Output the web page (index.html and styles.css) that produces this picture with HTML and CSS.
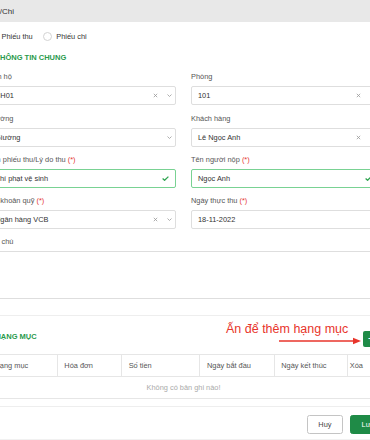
FILE: index.html
```html
<!DOCTYPE html>
<html lang="vi">
<head>
<meta charset="utf-8">
<title>Phiếu Thu/Chi</title>
<link rel="stylesheet" href="styles.css">
</head>
<body>
<div class="modal">
  <div class="modal-head"><span class="modal-title">Phiếu Thu/Chi</span></div>
  <div class="content">
    <div class="radios">
      <label class="radio checked"><span class="dot"></span>Phiếu thu</label>
      <label class="radio"><span class="dot"></span>Phiếu chi</label>
    </div>
    <h3 class="sec-title first">THÔNG TIN CHUNG</h3>
    <div class="grid">
      <div class="field">
        <label>Căn hộ</label>
        <div class="input"><span>CH01</span>
          <span class="icons"><svg class="x" viewBox="0 0 5 5"><path d="M0.8 0.8 4.2 4.2M4.2 0.8 0.8 4.2"/></svg><svg class="chev" viewBox="0 0 5 3"><path d="M0.5 0.5 2.5 2.5 4.5 0.5"/></svg></span>
        </div>
      </div>
      <div class="field">
        <label>Phòng</label>
        <div class="input"><span>101</span>
          <span class="icons"><svg class="x" viewBox="0 0 5 5"><path d="M0.8 0.8 4.2 4.2M4.2 0.8 0.8 4.2"/></svg><svg class="chev" viewBox="0 0 5 3"><path d="M0.5 0.5 2.5 2.5 4.5 0.5"/></svg></span>
        </div>
      </div>
      <div class="field">
        <label>Giường</label>
        <div class="input"><span>Giường</span>
          <span class="icons"><svg class="chev" viewBox="0 0 5 3"><path d="M0.5 0.5 2.5 2.5 4.5 0.5"/></svg></span>
        </div>
      </div>
      <div class="field">
        <label>Khách hàng</label>
        <div class="input"><span>Lê Ngọc Anh</span>
          <span class="icons"><svg class="x" viewBox="0 0 5 5"><path d="M0.8 0.8 4.2 4.2M4.2 0.8 0.8 4.2"/></svg><svg class="chev" viewBox="0 0 5 3"><path d="M0.5 0.5 2.5 2.5 4.5 0.5"/></svg></span>
        </div>
      </div>
      <div class="field">
        <label>Tên phiếu thu/Lý do thu <span class="req">(*)</span></label>
        <div class="input valid"><span>Phí phạt vệ sinh</span>
          <svg class="check" viewBox="0 0 7 5"><path d="M0.6 2.6 2.6 4.3 6.4 0.6"/></svg>
        </div>
      </div>
      <div class="field">
        <label>Tên người nộp <span class="req">(*)</span></label>
        <div class="input valid"><span>Ngọc Anh</span>
          <svg class="check" viewBox="0 0 7 5"><path d="M0.6 2.6 2.6 4.3 6.4 0.6"/></svg>
        </div>
      </div>
      <div class="field">
        <label>Tài khoản quỹ <span class="req">(*)</span></label>
        <div class="input"><span>Ngân hàng VCB</span>
          <span class="icons"><svg class="x" viewBox="0 0 5 5"><path d="M0.8 0.8 4.2 4.2M4.2 0.8 0.8 4.2"/></svg><svg class="chev" viewBox="0 0 5 3"><path d="M0.5 0.5 2.5 2.5 4.5 0.5"/></svg></span>
        </div>
      </div>
      <div class="field">
        <label>Ngày thực thu <span class="req">(*)</span></label>
        <div class="input"><span>18-11-2022</span></div>
      </div>
      <div class="field full">
        <label>Ghi chú</label>
        <div class="textarea"></div>
      </div>
    </div>
    <div class="divider"></div>
    <div class="sec-row">
      <h3 class="sec-title">HẠNG MỤC</h3>
      <button class="add-btn">+</button>
    </div>
    <table class="items">
      <thead>
        <tr>
          <th class="c1">Hạng mục</th>
          <th class="c2">Hóa đơn</th>
          <th class="c3">Số tiền</th>
          <th class="c4">Ngày bắt đầu</th>
          <th class="c5">Ngày kết thúc</th>
          <th class="c6">Xóa</th>
        </tr>
      </thead>
      <tbody>
        <tr><td colspan="6" class="empty">Không có bản ghi nào!</td></tr>
      </tbody>
    </table>
  </div>
  <div class="modal-foot">
    <button class="btn ghost">Huỷ</button>
    <button class="btn primary">Lưu</button>
  </div>
</div>
<div class="note">Ấn để thêm hạng mục</div>
<svg class="arrow" viewBox="0 0 82 8"><path d="M0 4H75" /><polygon points="74,0.8 82,4 74,7.2"/></svg>
</body>
</html>
```
FILE: styles.css
```css
* { box-sizing: border-box; margin: 0; padding: 0; }
html, body { width: 370px; height: 440px; overflow: hidden; }
body {
  font-family: "Liberation Sans", Arial, sans-serif;
  font-size: 7.4px;
  color: #333;
  background: #f1f1f1;
  position: relative;
}
.modal { background: #fff; height: 439px; }
.modal-head {
  height: 22px;
  background: #e8e8e8;
  display: flex;
  align-items: center;
}
.modal-title { font-size: 8px; color: #333; margin-left: -36.5px; white-space: nowrap; }

.content { margin-left: -12px; width: 391px; }

.radios { display: flex; gap: 10px; margin-top: 9.7px; height: 10px; align-items: center; }
.radio { display: flex; align-items: center; gap: 4px; line-height: 10px; color: #333; }
.dot { width: 9.5px; height: 9.5px; border: 1px solid #d3d3d3; border-radius: 50%; }
.radio.checked .dot { border: 3px solid #1f8b47; }

.sec-title {
  font-size: 7.5px;
  font-weight: bold;
  color: #2a9a4c;
  line-height: 10px;
  padding-left: 7.4px;
}
.sec-title.first { margin-top: 11.6px; }

.grid {
  display: grid;
  grid-template-columns: 188px 188px;
  column-gap: 15px;
  row-gap: 8.3px;
  margin-top: 9px;
}
.field.full { grid-column: 1 / -1; }
.field label { display: block; line-height: 10px; margin-bottom: 4px; color: #555; white-space: nowrap; }
.req { color: #e53935; }

.input {
  height: 19px;
  border: 1px solid #dedede;
  border-radius: 2px;
  display: flex;
  align-items: center;
  padding-left: 6px;
  white-space: nowrap;
}
.input.valid { border-color: #79d293; }
.icons { margin-left: auto; display: flex; align-items: center; gap: 9px; padding-right: 3.5px; }
.x { width: 5px; height: 5px; fill: none; stroke: #999; stroke-width: 0.8; }
.chev { width: 5px; height: 3px; fill: none; stroke: #999; stroke-width: 0.8; }
.check { margin-left: auto; margin-right: 6px; width: 7px; height: 5px; fill: none; stroke: #2ea44f; stroke-width: 1.3; }

.textarea { height: 48px; border: 1px solid #dedede; border-radius: 2px; }

.divider { margin-top: 16px; border-top: 1px solid #eeeeee; }

.sec-row { display: flex; justify-content: space-between; align-items: flex-start; margin-top: 14.2px; height: 16px; }
.sec-row .sec-title { margin-top: 1px; }
.add-btn {
  width: 16px; height: 16px;
  background: #1f8b47; color: #fff;
  border: none; border-radius: 2px;
  font-size: 10px; line-height: 16px;
}

.items {
  width: 100%;
  border-collapse: collapse;
  margin-top: 7.3px;
  table-layout: fixed;
}
.items th, .items td { border: 1px solid #e6e6e6; }
.items th {
  height: 22px;
  font-weight: normal;
  text-align: left;
  color: #555;
  padding: 0 6.5px;
  white-space: nowrap;
}
.items .c1 { width: 69.3px; border-left: none; }
.items .c2 { width: 64.4px; }
.items .c3 { width: 78.3px; }
.items .c4 { width: 74.3px; }
.items .c5 { width: 73.4px; }
.items .c6 { padding-left: 1.6px; border-right: none; }
.items td.empty { height: 22px; text-align: center; color: #aaa; border-left: none; border-right: none; }

.modal-foot {
  margin-top: 7px;
  border-top: 1px solid #eeeeee;
  padding-top: 8.3px;
  display: flex;
  justify-content: flex-end;
  gap: 7.7px;
  margin-right: -16px;
}
.btn {
  height: 19.2px;
  width: 35.6px;
  border-radius: 2.5px;
  font-family: inherit;
  font-size: 7.4px;
}
.btn.ghost { background: #fff; border: 1px solid #c4c4c4; color: #444; }
.btn.primary { background: #1f8b47; border: 1px solid #1f8b47; color: #fff; }

.note {
  position: absolute;
  left: 226px;
  top: 321px;
  font-size: 12.5px;
  line-height: 16px;
  color: #e8352b;
  white-space: nowrap;
}
.arrow {
  position: absolute;
  left: 279px;
  top: 337px;
  width: 82px;
  height: 8px;
}
.arrow path { stroke: #e8352b; stroke-width: 1.4; fill: none; }
.arrow polygon { fill: #e8352b; }
```
